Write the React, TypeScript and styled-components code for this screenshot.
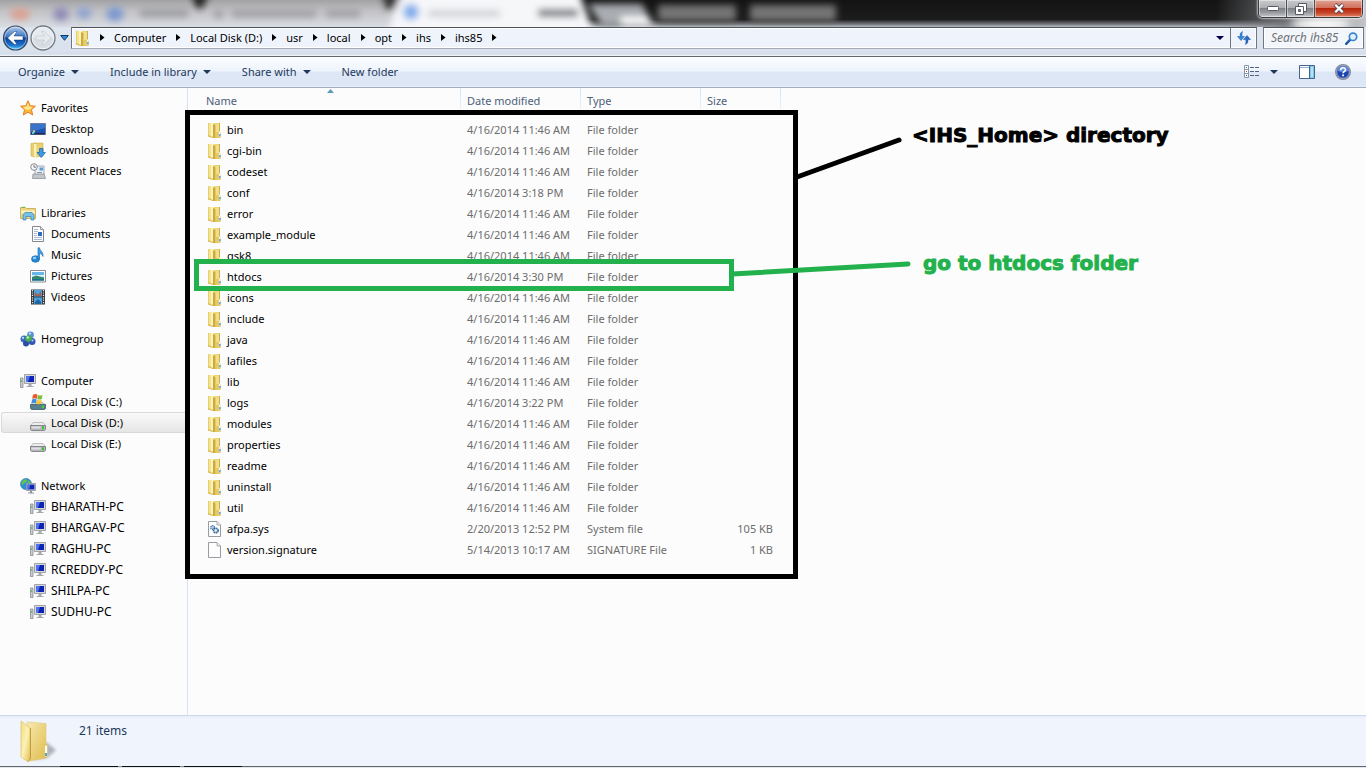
import React from "react";
import styled, { createGlobalStyle } from "styled-components";

const Global = createGlobalStyle`
  *, *::before, *::after { box-sizing: border-box; }
  html, body { margin: 0; padding: 0; }
  body {
    background: #fcfcfc;
    color: #000;
    font: 11px/21px "Noto Sans", "Open Sans", sans-serif;
    overflow: hidden;
  }
  button, input, table { font: inherit; color: inherit; }
  button { border: 0; padding: 0; background: none; white-space: nowrap; }
  a { color: inherit; text-decoration: none; }
  ul { list-style: none; margin: 0; padding: 0; }
  svg { display: block; flex: none; }
`;

const Window = styled.div`
  display: flex;
  flex-direction: column;
  min-height: 100vh;
`;

/* ---------- window frame ---------- */

const Frame = styled.header`
  position: relative;
  display: flex;
  flex-direction: column;
  padding-bottom: 4px;
  border-bottom: 1px solid #65686f;
  background: linear-gradient(#c9ced6 0, #c9ced6 24px, #dfe5ee 28px, #d9e2ed 50px, #d3dde9 54px, #f4f7fb 56px);
`;

const Glass = styled.svg`
  position: absolute;
  top: 0;
  left: 0;
  width: 100%;
  height: 27px;
`;

const TitleBar = styled.div`
  position: relative;
  display: flex;
  justify-content: flex-end;
  align-items: flex-start;
  height: 24px;
  padding-right: 3px;
`;

const Captions = styled.div`
  display: flex;
  height: 18px;
  border: 1px solid #3c3f45;
  border-top: 0;
  border-radius: 0 0 5px 5px;
  overflow: hidden;
  box-shadow: 0 0 2px 1px #ffffffa0;
`;

const Caption = styled.button<{ $close?: boolean }>`
  display: flex;
  align-items: center;
  justify-content: center;
  width: ${(p) => (p.$close ? 47 : 28)}px;
  border-right: ${(p) => (p.$close ? "0" : "1px solid #4b4e55")};
  background: ${(p) =>
    p.$close
      ? "linear-gradient(#dfa396 0, #d3705b 45%, #b5260b 50%, #c6442a 75%, #df8a68 100%)"
      : "linear-gradient(#c9cacc 0, #adafb2 45%, #7f8287 50%, #9a9ca0 75%, #c8cace 100%)"};
  box-shadow: inset 0 0 0 1px #ffffff70;
`;

const NavRow = styled.div`
  position: relative;
  display: flex;
  align-items: center;
  height: 28px;
  padding: 0 2px;
`;

const Travel = styled.div`
  display: flex;
  align-items: center;
  width: 69px;
`;

const AddressBar = styled.div`
  display: flex;
  flex: 1;
  align-items: stretch;
  height: 22px;
  margin-right: 6px;
  border: 1px solid #6f7682;
  border-top-color: #4d525b;
  border-bottom-color: #a3aab6;
  background: #eff3fb;
  box-shadow: inset 0 0 0 1px #fff;
`;

const Crumbs = styled.nav`
  display: flex;
  flex: 1;
  align-items: center;
  padding: 0 0 1px 3px;
`;

const Crumb = styled.button`
  display: flex;
  align-items: center;
  gap: 10px;
  height: 19px;
  margin-left: 9px;
  line-height: 19px;
`;

const DropButton = styled.button`
  display: flex;
  align-items: center;
  justify-content: center;
  width: 20px;
`;

const RefreshButton = styled(DropButton)`
  width: 26px;
  border-left: 1px solid #6f7682;
`;

const Search = styled.label`
  display: flex;
  align-items: center;
  width: 101px;
  height: 22px;
  padding: 0 5px 0 7px;
  border: 1px solid #6f7682;
  border-top-color: #4d525b;
  border-bottom-color: #a3aab6;
  background: #f3f6fb;
  box-shadow: inset 0 0 0 1px #fff;

  input {
    flex: 1;
    min-width: 0;
    height: 20px;
    padding: 0 0 2px;
    border: 0;
    outline: 0;
    background: none;
    font-style: italic;
    font-size: 12px;
  }
  input::placeholder { color: #6f7276; opacity: 1; }
`;

/* ---------- command bar ---------- */

const CommandBar = styled.div`
  display: flex;
  align-items: center;
  height: 31px;
  padding: 0 15px 1px 18px;
  border-bottom: 1px solid #a0afc3;
  background: linear-gradient(#fcfdff 0, #eef4fc 14px, #dde7f5 15px, #dce6f4 28px, #e6eef9 30px);
  color: #1e395b;
`;

const Command = styled.button`
  display: flex;
  align-items: center;
  gap: 6px;
  margin-right: 31px;
`;

const CommandTools = styled.div`
  display: flex;
  align-items: center;
  margin-left: auto;
`;

const Tool = styled.button<{ $gap: number }>`
  display: flex;
  align-items: center;
  margin-left: ${(p) => p.$gap}px;
`;

/* ---------- body ---------- */

const Body = styled.div`
  display: flex;
  flex: 1;
`;

const Sidebar = styled.nav`
  flex: none;
  display: flex;
  flex-direction: column;
  gap: 21px;
  width: 188px;
  padding-top: 9px;
  border-right: 1px solid #d6e5f5;
`;

const Place = styled.a<{ $child?: boolean; $active?: boolean }>`
  display: flex;
  align-items: center;
  gap: 5px;
  height: 21px;
  margin-left: 1px;
  padding-left: ${(p) => (p.$child ? 28 : 18)}px;
  border: 1px solid ${(p) => (p.$active ? "#d9d9d9" : "transparent")};
  border-right: 0;
  border-radius: 3px 0 0 3px;
  background: ${(p) => (p.$active ? "linear-gradient(#fafafa, #e5e5e5)" : "none")};
`;

const Machine = styled.span`
  font-size: 12px;
`;

const Files = styled.main`
  position: relative;
  flex: 1;
  min-width: 0;
`;

const Table = styled.table`
  table-layout: fixed;
  width: 593px;
  border-collapse: collapse;

  td { height: 21px; padding: 0 6px; color: #6d6d6d; white-space: nowrap; }
  td:first-child { padding-left: 19px; color: #000; }
  td:last-child { padding-right: 8px; text-align: right; }
`;

const Column = styled.th<{ $width: number; $first?: boolean }>`
  position: relative;
  width: ${(p) => p.$width}px;
  height: 31px;
  padding: 2px 6px 8px ${(p) => (p.$first ? 18 : 6)}px;
  background: linear-gradient(#d3e6f7, #e3eef9 18px, #fcfcfc 24px) right top / 1px 24px no-repeat;
  color: #4c607a;
  font-weight: 400;
  text-align: left;
`;

const SortMark = styled.svg`
  position: absolute;
  top: 1px;
  left: 139px;
`;

const FileName = styled.span`
  display: flex;
  align-items: center;
  gap: 4px;
`;

/* ---------- annotations over the file list ---------- */

const HomeBox = styled.div`
  position: absolute;
  top: 22px;
  left: -3px;
  width: 613px;
  height: 469px;
  border: 5px solid #000;
  pointer-events: none;
`;

const HtdocsBox = styled.div`
  position: absolute;
  top: 171px;
  left: 6px;
  width: 540px;
  height: 32px;
  border: 5px solid #22b14c;
  pointer-events: none;
`;

const Pointers = styled.svg`
  position: absolute;
  top: 0;
  left: 540px;
  pointer-events: none;
`;

const Note = styled.p<{ $top: number; $left: number; $color: string }>`
  position: absolute;
  top: ${(p) => p.$top}px;
  left: ${(p) => p.$left}px;
  margin: 0;
  color: ${(p) => p.$color};
  font: 700 20px/24px "DejaVu Sans", sans-serif;
  -webkit-text-stroke: 1px ${(p) => p.$color};
  white-space: nowrap;
`;

/* ---------- details pane ---------- */

const Details = styled.footer`
  display: flex;
  gap: 22px;
  height: 51px;
  padding: 4px 19px 0;
  border-top: 1px solid #ccd9ea;
  background: linear-gradient(#e6eef8 0, #f0f4fc 3px);
  color: #1e395b;
  font-size: 12px;
`;

const TaskEdge = styled.div`
  height: 2px;
  background:
    linear-gradient(90deg, #101018 58px, #8a8c90 58px, #8a8c90 62px, #101018 62px, #101018 120px, #8a8c90 120px, #8a8c90 124px, #101018 124px) 60px 0 / 182px 1px no-repeat,
    linear-gradient(#62656b 1px, #e4e7ec 1px);
`;

/* ---------- icons ---------- */

const Icon = ({ children }: { children: React.ReactNode }) => (
  <svg width="16" height="16" viewBox="0 0 16 16">{children}</svg>
);

const FolderIcon = () => (
  <Icon>
    <path d="M6 1h7v9h1v5l-1 1H6z" fill="#e6c95f" />
    <path d="M7 1.500h5.500V10H7z" fill="#f0de8a" />
    <path d="M12 1h1v9h-1z" fill="#cfae4a" />
    <path d="M1 1h4v14l-4-1z" fill="#f4e28c" />
    <path d="M1 1h1v13l-1-.3z" fill="#e9cf6c" />
    <path d="M4 1h3v14.500L4 14.500z" fill="#fbf3bd" />
    <path d="M6 2l2.500 1v12.500L6 16z" fill="#cda93f" />
    <path d="M8 3h1v12H8z" fill="#e4c863" />
    <path d="M1 13l5 2v1l-5-1.500z" fill="#d9b94e" />
    <path d="M12 9.500h1.600v5H12z" fill="#f8fbfd" />
    <path d="M12.200 12h1.400v2.200h-1.400z" fill="#3f9be0" />
  </Icon>
);

const BigFolderIcon = () => (
  <svg width="38" height="43" viewBox="0 0 38 43">
    <defs>
      <linearGradient id="bf1" x2="1" y2="1"><stop stopColor="#f3dd85" /><stop offset=".5" stopColor="#fcf1b4" /><stop offset="1" stopColor="#e3c257" /></linearGradient>
      <linearGradient id="bf2" x2="1" y2="1"><stop stopColor="#f6eab0" /><stop offset="1" stopColor="#dfba48" /></linearGradient>
      <filter id="bfs"><feGaussianBlur stdDeviation="1.500" /></filter>
    </defs>
    <path d="M14 40 27 22l10 8-9 8z" fill="#8f97a6" opacity=".7" filter="url(#bfs)" />
    <path d="M8 2l19 1.500V24l2 2v10l-2 2-16 3z" fill="url(#bf2)" stroke="#e0c878" strokeWidth=".6" />
    <path d="M2 1l9 7v31l-2 3-7-5z" fill="url(#bf1)" stroke="#d9bb5c" strokeWidth=".6" />
    <path d="M11.500 8v30l-2 3.500" fill="none" stroke="#c39d3a" />
    <rect x="25.500" y="25" width="3" height="12" rx="1.500" fill="#fff" stroke="#d0b257" strokeWidth=".6" />
    <rect x="26" y="33" width="2" height="3" fill="#4aa3e6" />
  </svg>
);

const pcShapes = (
  <>
    <path d="M.5 5h2.500v9.500H.5z" fill="#c9ccd0" stroke="#7c8086" strokeWidth=".7" />
    <path d="M1.200 7h1v2h-1z" fill="#45c535" />
    <path d="M4.500 1.500h11v9h-11z" fill="#d7d9dc" stroke="#8d9197" strokeWidth=".8" />
    <path d="M6 3h8v6H6z" fill="#0f22b4" />
    <path d="M6 3h4l-2 6H6z" fill="#4d75e6" />
    <path d="M8.500 11h3v2h-3zM6.500 13h7v1h-7z" fill="#a4a7ac" />
  </>
);

const driveShapes = (
  <>
    <path d="M3 7.500h10l2.500 3.500H.5z" fill="#eceded" stroke="#a9abae" strokeWidth=".7" />
    <path d="M.5 10.500h15v4l-1 1h-13l-1-1z" fill="#b4b6ba" stroke="#77797d" strokeWidth=".8" />
    <path d="M1.500 11.500h9v2h-9z" fill="#dfe0e2" />
    <path d="M12 11.200h2v3h-2z" fill="#36c32c" />
  </>
);

const icons: Record<string, React.ReactNode> = {
  star: (
    <>
      <path d="M8 .8 10.200 5.700 15.400 6.200 11.500 9.700 12.700 15 8 12.200 3.300 15 4.500 9.700.6 6.200 5.800 5.700z" fill="#fbb936" stroke="#e07f2c" strokeWidth="1" strokeLinejoin="round" />
      <path d="M8 3l1.300 3.500 3.500.5-3 2.500L8 10 5.500 9.500 3 7l3.500-.5z" fill="#fee68a" />
    </>
  ),
  desktop: (
    <>
      <path d="M.5 2.500h15v11H.5z" fill="#1b52b0" stroke="#6d7f9a" />
      <path d="M1 3h14v4L1 11z" fill="#4d8be0" opacity=".6" />
      <path d="M1 12h14v1.500H1z" fill="#1c2c55" />
      <path d="M3 9.500h2v2H3z" fill="#f0d44b" /><path d="M2 11h2v2H2z" fill="#57c4ee" />
    </>
  ),
  downloads: (
    <>
      <path d="M1 1.500 5 1v14l-4-1zM5 1h8v13l-7 1z" fill="#e8cf70" stroke="#cfb052" strokeWidth=".6" />
      <path d="M4 2v12.500l2.500.5V2z" fill="#faf0b4" />
      <path d="M9.500 6.500h3.500v4h2.500L11.200 15.500 7 10.500h2.500z" fill="#3a9be4" stroke="#1b62a8" strokeWidth=".7" />
    </>
  ),
  recent: (
    <>
      <path d="M5 3h9v9H5z" fill="#eef2f6" stroke="#8e949c" strokeWidth=".8" />
      <path d="M9.500 4.500H13v3H9.500z" fill="#5a9ad6" />
      <path d="M7 9h5v1H7z" fill="#7f95ad" />
      <path d="M3 11h11l1.500 4.500h-13z" fill="#c3c6ca" stroke="#84888e" strokeWidth=".7" />
      <circle cx="4" cy="4" r="3.300" fill="#f6f7f8" stroke="#878c93" />
      <path d="M4 2v2.200h2" fill="none" stroke="#55595f" strokeWidth=".8" />
    </>
  ),
  libraries: (
    <>
      <path d="M.5 2.500h5l1 1h9v10H.5z" fill="#ecd681" stroke="#c5a64b" strokeWidth=".8" />
      <path d="M1 5.500h14v3H1z" fill="#faf0b9" />
      <path d="M2 1.800h3v1H2z" fill="#56b848" />
      <path d="M3 15V10l2-2.500h7L14 10v5h-3v-3.500H6V15z" fill="#74c1ea" stroke="#3883b8" strokeWidth=".7" />
    </>
  ),
  documents: (
    <>
      <path d="M2.500.5h8l3 3v12h-11z" fill="#fdfdfe" stroke="#83888f" />
      <path d="M10.500.5v3h3" fill="#dfe3e8" stroke="#83888f" strokeWidth=".8" />
      <path d="M4 3.500h4M4 5.500h4M4 7.500h3M4 9.500h3M4 11.500h8M4 13.500h8" stroke="#a9bbd2" />
      <path d="M8 6h4v4H8z" fill="#2f6dbe" />
    </>
  ),
  music: (
    <>
      <ellipse cx="5.500" cy="12" rx="4" ry="3.300" fill="#2387d8" stroke="#1562a6" strokeWidth=".6" />
      <path d="M8 12V.8h1.500C10 4 13.500 4.500 13 9.500 12 7 10.500 6.500 9.500 6.500V12z" fill="#3e9fe8" stroke="#1767ad" strokeWidth=".6" />
      <ellipse cx="4.500" cy="11" rx="1.800" ry="1.200" fill="#92cdf7" />
    </>
  ),
  pictures: (
    <>
      <path d="M.5 2.500h15v11.500H.5z" fill="#fff" stroke="#888d94" />
      <path d="M2 4h12v8.500H2z" fill="#67b6e8" />
      <path d="M2 7h12v2H2z" fill="#dff1f6" />
      <path d="M2 9l4-1.500 8 2v3H2z" fill="#2f8a6c" /><path d="M2 11h12v1.500H2z" fill="#1d6d8e" />
    </>
  ),
  videos: (
    <>
      <path d="M1 .5h14v15H1z" fill="#34373b" />
      <path d="M4 1h8v6.500H4zM4 8.500h8V15H4z" fill="#4ba3de" />
      <path d="M5 3l3 3 3-4v5H5z" fill="#b4573c" /><path d="M5 13l3-3 3 3v2H5z" fill="#26639e" />
      <path d="M2.500 1v14M13.500 1v14" stroke="#eceded" strokeWidth="1.200" strokeDasharray="1.200 1.200" />
    </>
  ),
  homegroup: (
    <>
      <circle cx="10.500" cy="4" r="3.400" fill="#5a8fdc" /><circle cx="4" cy="8" r="3.500" fill="#3c6cc6" />
      <circle cx="12" cy="10.500" r="3.500" fill="#3558b8" /><circle cx="6" cy="12.500" r="3" fill="#2d4ea8" />
      <circle cx="8.500" cy="7.500" r="3.200" fill="#46b04a" />
      <circle cx="7.800" cy="6.500" r="1.200" fill="#c9f0bd" /><circle cx="3" cy="6.800" r="1.100" fill="#d2e4fb" />
      <circle cx="10" cy="2.600" r="1.100" fill="#d2e4fb" /><circle cx="12.500" cy="9.500" r="1" fill="#b7cdf4" />
    </>
  ),
  pc: pcShapes,
  drive: driveShapes,
  systemDrive: (
    <>
      <path d="M3 8.500h10l2.500 2.500H.5z" fill="#d5dde2" stroke="#8f979d" strokeWidth=".6" />
      <path d="M.5 10.500h15v4l-1 1h-13l-1-1z" fill="#55808f" stroke="#3c5a66" strokeWidth=".8" />
      <path d="M12 11.500h2v2.500h-2z" fill="#46d434" />
      <path d="M3 .8q2.200-1.500 4.600 0L6.800 4.800q-2.300-1.200-4.600 0z" fill="#ea5a2a" />
      <path d="M8 1q2.300 1.200 4.600 0L11.800 5q-2.300 1.200-4.600 0z" fill="#7cbf3a" />
      <path d="M2.100 5.400q2.300-1.200 4.600 0L5.900 9.400q-2.300-1.200-4.600 0z" fill="#3c8fe0" />
      <path d="M7.100 5.700q2.300 1.200 4.600 0l-.8 4q-2.300 1.200-4.600 0z" fill="#f8c52e" />
    </>
  ),
  network: (
    <>
      <circle cx="6" cy="6" r="5.500" fill="#2f8fd6" stroke="#1d67a8" strokeWidth=".6" />
      <path d="M3 2q3-1.500 4 0T5 5 3 8 1 5zM8 2q3 1 2.500 4L8 5z" fill="#5fc257" />
      <path d="M6.500 5.500h9v7h-9z" fill="#dfe2e6" stroke="#8a9098" strokeWidth=".8" />
      <path d="M7.500 6.500h7v5h-7z" fill="#1426b8" /><path d="M7.500 6.500h3l-1.500 5H7.500z" fill="#4b6fe0" />
      <path d="M10 13h2v1.500h2v1H8v-1h2z" fill="#8f9399" />
    </>
  ),
  system: (
    <>
      <path d="M1.500.5h8.500l3.500 3.500v11.500h-12z" fill="#fcfdfe" stroke="#989ca1" />
      <path d="M10 .5V4h3.500" fill="#e9ebee" stroke="#989ca1" strokeWidth=".8" />
      <circle cx="5.500" cy="6.500" r="1.800" fill="#c5dbef" stroke="#4478ac" strokeWidth="1.300" strokeDasharray="1.300 .5" />
      <circle cx="8.800" cy="9.500" r="2.400" fill="#b4cfe8" stroke="#2c5f96" strokeWidth="1.400" strokeDasharray="1.500 .5" />
      <circle cx="8.800" cy="9.500" r=".8" fill="#fff" />
    </>
  ),
  file: (
    <>
      <path d="M1.500.5h8.500l3.500 3.500v11.500h-12z" fill="#fdfdfd" stroke="#989ca1" />
      <path d="M10 .5V4h3.500" fill="#e9ebee" stroke="#989ca1" strokeWidth=".8" />
    </>
  ),
};

const Caret = ({ color = "#1e395b" }: { color?: string }) => (
  <svg width="8" height="4" viewBox="0 0 8 4"><path d="M0 0h8L4 4z" fill={color} /></svg>
);

const CrumbArrow = () => (
  <svg width="5" height="7" viewBox="0 0 5 7"><path d="M0 0l4.500 3.500L0 7z" /></svg>
);

/* ---------- data ---------- */

type PlaceItem = { label: string; icon: string; active?: boolean; machine?: boolean };

const groups: { head: PlaceItem; items: PlaceItem[] }[] = [
  {
    head: { label: "Favorites", icon: "star" },
    items: [
      { label: "Desktop", icon: "desktop" },
      { label: "Downloads", icon: "downloads" },
      { label: "Recent Places", icon: "recent" },
    ],
  },
  {
    head: { label: "Libraries", icon: "libraries" },
    items: [
      { label: "Documents", icon: "documents" },
      { label: "Music", icon: "music" },
      { label: "Pictures", icon: "pictures" },
      { label: "Videos", icon: "videos" },
    ],
  },
  { head: { label: "Homegroup", icon: "homegroup" }, items: [] },
  {
    head: { label: "Computer", icon: "pc" },
    items: [
      { label: "Local Disk (C:)", icon: "systemDrive" },
      { label: "Local Disk (D:)", icon: "drive", active: true },
      { label: "Local Disk (E:)", icon: "drive" },
    ],
  },
  {
    head: { label: "Network", icon: "network" },
    items: ["BHARATH-PC", "BHARGAV-PC", "RAGHU-PC", "RCREDDY-PC", "SHILPA-PC", "SUDHU-PC"].map((label) => ({
      label,
      icon: "pc",
      machine: true,
    })),
  },
];

const morning = "4/16/2014 11:46 AM";
const folderDates: [string, string][] = [
  ["bin", morning],
  ["cgi-bin", morning],
  ["codeset", morning],
  ["conf", "4/16/2014 3:18 PM"],
  ["error", morning],
  ["example_module", morning],
  ["gsk8", morning],
  ["htdocs", "4/16/2014 3:30 PM"],
  ["icons", morning],
  ["include", morning],
  ["java", morning],
  ["lafiles", morning],
  ["lib", morning],
  ["logs", "4/16/2014 3:22 PM"],
  ["modules", morning],
  ["properties", morning],
  ["readme", morning],
  ["uninstall", morning],
  ["util", morning],
];

const rows = [
  ...folderDates.map(([name, date]) => ({ name, date, type: "File folder", size: "", icon: "folder" })),
  { name: "afpa.sys", date: "2/20/2013 12:52 PM", type: "System file", size: "105 KB", icon: "system" },
  { name: "version.signature", date: "5/14/2013 10:17 AM", type: "SIGNATURE File", size: "1 KB", icon: "file" },
];

const path = ["Computer", "Local Disk (D:)", "usr", "local", "opt", "ihs", "ihs85"];

/* ---------- parts ---------- */

const GlassArt = () => (
  <Glass aria-hidden="true">
    <defs>
      <filter id="soft" filterUnits="userSpaceOnUse" x="-40" y="-40" width="1000" height="110"><feGaussianBlur stdDeviation="3.500" /></filter>
      <filter id="halo" x="-30%" y="-150%" width="160%" height="400%"><feGaussianBlur stdDeviation="4" /></filter>
      <linearGradient id="left" x2="0" y2="1"><stop stopColor="#a2a2a4" /><stop offset=".4" stopColor="#c2c2c5" /><stop offset="1" stopColor="#d9dce3" /></linearGradient>
      <linearGradient id="dark" x2="0" y2="1"><stop stopColor="#131313" /><stop offset=".72" stopColor="#1c1c1c" /><stop offset=".9" stopColor="#77797d" /><stop offset="1" stopColor="#b9c0ca" /></linearGradient>
      <linearGradient id="glow"><stop stopColor="#8b8d91" stopOpacity="0" /><stop offset=".6" stopColor="#77797d" /><stop offset="1" stopColor="#c4c6ca" /></linearGradient>
    </defs>
    <rect width="100%" height="27" fill="url(#dark)" />
    <rect width="540" height="27" fill="url(#left)" />
    <g filter="url(#soft)">
      <path d="M388 34l12-44h178l16 44z" fill="#f6f7f9" />
      <path d="M190-10h20l-7 18h-7z" fill="#222" /><path d="M380-10h24l-10 20h-7z" fill="#333" />
      <path d="M588 4h54l12 22h-52z" fill="#a9acb0" />
      <path d="M620 17h26l8 9h-32z" fill="#fff" />
      <ellipse cx="20" cy="14" rx="10" ry="6" fill="#dc9f90" />
      <ellipse cx="61" cy="14" rx="8" ry="7" fill="#8e8bb8" />
      <ellipse cx="84" cy="13" rx="8" ry="6" fill="#8fa3d0" />
      <ellipse cx="115" cy="14" rx="9" ry="7" fill="#7b97cf" />
      <path d="M140 9h48v8h-48zM214 10h9v8h-9zM232 10h84v7h-84zM326 10h34v7h-34z" fill="#9c9da2" />
      <circle cx="411" cy="12" r="8" fill="#7fadec" />
      <path d="M428 10h72v7h-72z" fill="#cfd1d4" /><path d="M538 9h40v8h-40z" fill="#77787b" />
      <path d="M658 5h78v16h-78zM750 5h86v16h-86z" fill="#747474" />
    </g>
    <svg x="100%" overflow="visible">
      <rect x="-150" width="150" height="27" fill="url(#glow)" />
      <ellipse cx="-45" cy="24" rx="30" ry="7" fill="#fff" filter="url(#halo)" />
    </svg>
  </Glass>
);

const PlaceLink = ({ item, child }: { item: PlaceItem; child?: boolean }) => (
  <Place href="#" $child={child} $active={item.active}>
    <Icon>{icons[item.icon]}</Icon>
    {item.machine ? <Machine>{item.label}</Machine> : <span>{item.label}</span>}
  </Place>
);

export default function App() {
  return (
    <Window>
      <Global />
      <Frame>
        <GlassArt />
        <TitleBar>
          <Captions>
            <Caption aria-label="Minimize">
              <svg width="12" height="5" viewBox="0 0 12 5"><rect x=".5" y=".5" width="11" height="4" rx="1" fill="#fff" stroke="#555963" /></svg>
            </Caption>
            <Caption aria-label="Restore">
              <svg width="12" height="12" viewBox="0 0 12 12">
                <path d="M3.500.5h8v8h-8z" fill="#fff" stroke="#555963" />
                <path d="M.5 3.500h8v8h-8z" fill="#fff" stroke="#555963" />
                <path d="M3.500 6.500h2v2h-2z" fill="#8d9096" stroke="#555963" />
              </svg>
            </Caption>
            <Caption $close aria-label="Close">
              <svg width="12" height="11" viewBox="0 0 12 11">
                <path d="M2 1.500l8 8M10 1.500l-8 8" stroke="#5c4a50" strokeWidth="4" />
                <path d="M2.300 1.800l7.400 7.400M9.700 1.800l-7.400 7.400" stroke="#fff" strokeWidth="2.300" />
              </svg>
            </Caption>
          </Captions>
        </TitleBar>
        <NavRow>
          <Travel>
            <button aria-label="Back">
              <svg width="27" height="26" viewBox="0 0 27 26">
                <defs>
                  <linearGradient id="back" x2="0" y2="1"><stop stopColor="#b4cdea" /><stop offset=".45" stopColor="#3b78c6" /><stop offset=".5" stopColor="#0b3b94" /><stop offset=".8" stopColor="#1b74cf" /><stop offset="1" stopColor="#58d4f8" /></linearGradient>
                </defs>
                <circle cx="13.500" cy="13" r="12" fill="url(#back)" stroke="#3a4660" strokeWidth="1.200" />
                <circle cx="13.500" cy="13" r="10.800" fill="none" stroke="#ffffff70" strokeWidth="1" />
                <path d="M5.500 13l7-6.500h2.500l-3 4.500H21v4h-9l3 4.500h-2.500z" fill="#fff" stroke="#17356f" strokeWidth=".5" />
              </svg>
            </button>
            <button aria-label="Forward">
              <svg width="28" height="26" viewBox="0 0 28 26">
                <circle cx="14" cy="13" r="12" fill="#d7dde3" stroke="#747a83" strokeWidth="1.300" />
                <circle cx="14" cy="13" r="10.700" fill="none" stroke="#f1f4f7" strokeWidth="1" />
                <path d="M3.500 12a10.500 10 0 0 1 21 0q-10 4-21 0z" fill="#eef1f3" opacity=".7" />
                <path d="M22 13l-7-6.500h-2.500l3 4.500H7v4h8.500l-3 4.500H15z" fill="#e8ebee" stroke="#c3c9d0" strokeWidth=".7" />
              </svg>
            </button>
            <DropButton aria-label="Recent pages">
              <svg width="9" height="6" viewBox="0 0 9 6"><path d="M.7.500h7.600L4.500 5.300z" fill="#2f8bd8" stroke="#123a70" /></svg>
            </DropButton>
          </Travel>
          <AddressBar>
            <Crumbs aria-label="Path">
              <FolderIcon />
              <Crumb aria-label="Root"><CrumbArrow /></Crumb>
              {path.map((name) => (
                <Crumb key={name}>{name}<CrumbArrow /></Crumb>
              ))}
            </Crumbs>
            <DropButton aria-label="Previous locations"><Caret color="#000050" /></DropButton>
            <RefreshButton aria-label="Refresh">
              <svg width="14" height="14" viewBox="0 0 14 14">
                <path d="M5.500.5Q2.500 1.500 3 5.500H.5L4 9.500l3.500-4H5.200q-.5-3 .3-5z" fill="#3a86dc" stroke="#2060ae" strokeWidth=".5" />
                <path d="M8.500 13.500q3-1 2.500-5h2.500L10 4.500l-3.500 4h2.300q.5 3-.3 5z" fill="#2b6cc4" stroke="#184f98" strokeWidth=".5" />
              </svg>
            </RefreshButton>
          </AddressBar>
          <Search>
            <input type="text" placeholder="Search ihs85" aria-label="Search ihs85" />
            <svg width="13" height="13" viewBox="0 0 13 13">
              <path d="M1.200 11.800L5 7.800" stroke="#1d59a8" strokeWidth="2.400" strokeLinecap="round" />
              <circle cx="8" cy="4.800" r="3.700" fill="#dff0fb" stroke="#3b83cf" strokeWidth="1.700" />
            </svg>
          </Search>
        </NavRow>
      </Frame>

      <CommandBar>
        <Command>Organize <Caret /></Command>
        <Command>Include in library <Caret /></Command>
        <Command>Share with <Caret /></Command>
        <Command>New folder</Command>
        <CommandTools>
          <Tool $gap={0} aria-label="Change view">
            <svg width="15" height="13" viewBox="0 0 15 13">
              <path d="M.5.5h4v12h-4zM.5 4.500h4M.5 8.500h4" fill="#fff" stroke="#8796aa" />
              <path d="M2 2h1v1H2zM2 10h1v1H2z" fill="#2c5c98" /><path d="M2 6h1v1H2z" fill="#e03a1a" />
              <path d="M6 2.500h4M11 2.500h4M6 6.500h4M11 6.500h4M6 10.500h4M11 10.500h4" stroke="#51647e" />
            </svg>
          </Tool>
          <Tool $gap={11} aria-label="More views"><Caret /></Tool>
          <Tool $gap={21} aria-label="Show the preview pane">
            <svg width="16" height="14" viewBox="0 0 16 14">
              <path d="M.5.5h15v13H.5z" fill="#fff" stroke="#40668f" />
              <path d="M1 2.500h9" stroke="#9fb4cc" /><path d="M10 1h5v12h-5z" fill="#7cc8e8" />
              <path d="M10.500 1v12" stroke="#40668f" /><path d="M12 2h2v10h-2z" fill="#b7e2f3" />
            </svg>
          </Tool>
          <Tool $gap={20} aria-label="Help">
            <svg width="16" height="16" viewBox="0 0 16 16">
              <circle cx="8" cy="8" r="7.300" fill="#1e46b0" stroke="#8a8d94" strokeWidth="1.400" />
              <circle cx="8" cy="8" r="6.300" fill="none" stroke="#d6ddec" strokeWidth=".6" />
              <path d="M2.500 7a5.500 5 0 0 1 11 0q-5 2-11 0z" fill="#5e8ae0" />
              <path d="M5.700 6.200q0-2.500 2.400-2.500t2.300 2.100Q10.400 7 9 7.800q-.9.500-.9 1.500" fill="none" stroke="#fff" strokeWidth="1.600" />
              <path d="M7.200 10.500h1.800v1.800H7.200z" fill="#fff" />
            </svg>
          </Tool>
        </CommandTools>
      </CommandBar>

      <Body>
        <Sidebar aria-label="Places">
          {groups.map((group) => (
            <ul key={group.head.label}>
              <li><PlaceLink item={group.head} /></li>
              {group.items.map((item) => (
                <li key={item.label}><PlaceLink item={item} child /></li>
              ))}
            </ul>
          ))}
        </Sidebar>

        <Files>
          <Table>
            <thead>
              <tr>
                <Column $width={273} $first>
                  Name
                  <SortMark width="7" height="4" viewBox="0 0 7 4"><path d="M0 4l3.500-4L7 4z" fill="#5c9cb8" /></SortMark>
                </Column>
                <Column $width={120}>Date modified</Column>
                <Column $width={120}>Type</Column>
                <Column $width={80}>Size</Column>
              </tr>
            </thead>
            <tbody>
              {rows.map((row) => (
                <tr key={row.name}>
                  <td>
                    <FileName>
                      {row.icon === "folder" ? <FolderIcon /> : <Icon>{icons[row.icon]}</Icon>}
                      {row.name}
                    </FileName>
                  </td>
                  <td>{row.date}</td>
                  <td>{row.type}</td>
                  <td>{row.size}</td>
                </tr>
              ))}
            </tbody>
          </Table>

          <HomeBox />
          <HtdocsBox />
          <Pointers width="190" height="200" viewBox="0 0 190 200" fill="none" strokeWidth="5" strokeLinecap="round">
            <path d="M69 89L171 52" stroke="#000" />
            <path d="M4 186L180 176" stroke="#22b14c" />
          </Pointers>
          <Note $top={35} $left={724} $color="#000">&lt;IHS_Home&gt; directory</Note>
          <Note $top={163} $left={735} $color="#22b14c">go to htdocs folder</Note>
        </Files>
      </Body>

      <Details>
        <BigFolderIcon />
        <span>21 items</span>
      </Details>
      <TaskEdge />
    </Window>
  );
}
